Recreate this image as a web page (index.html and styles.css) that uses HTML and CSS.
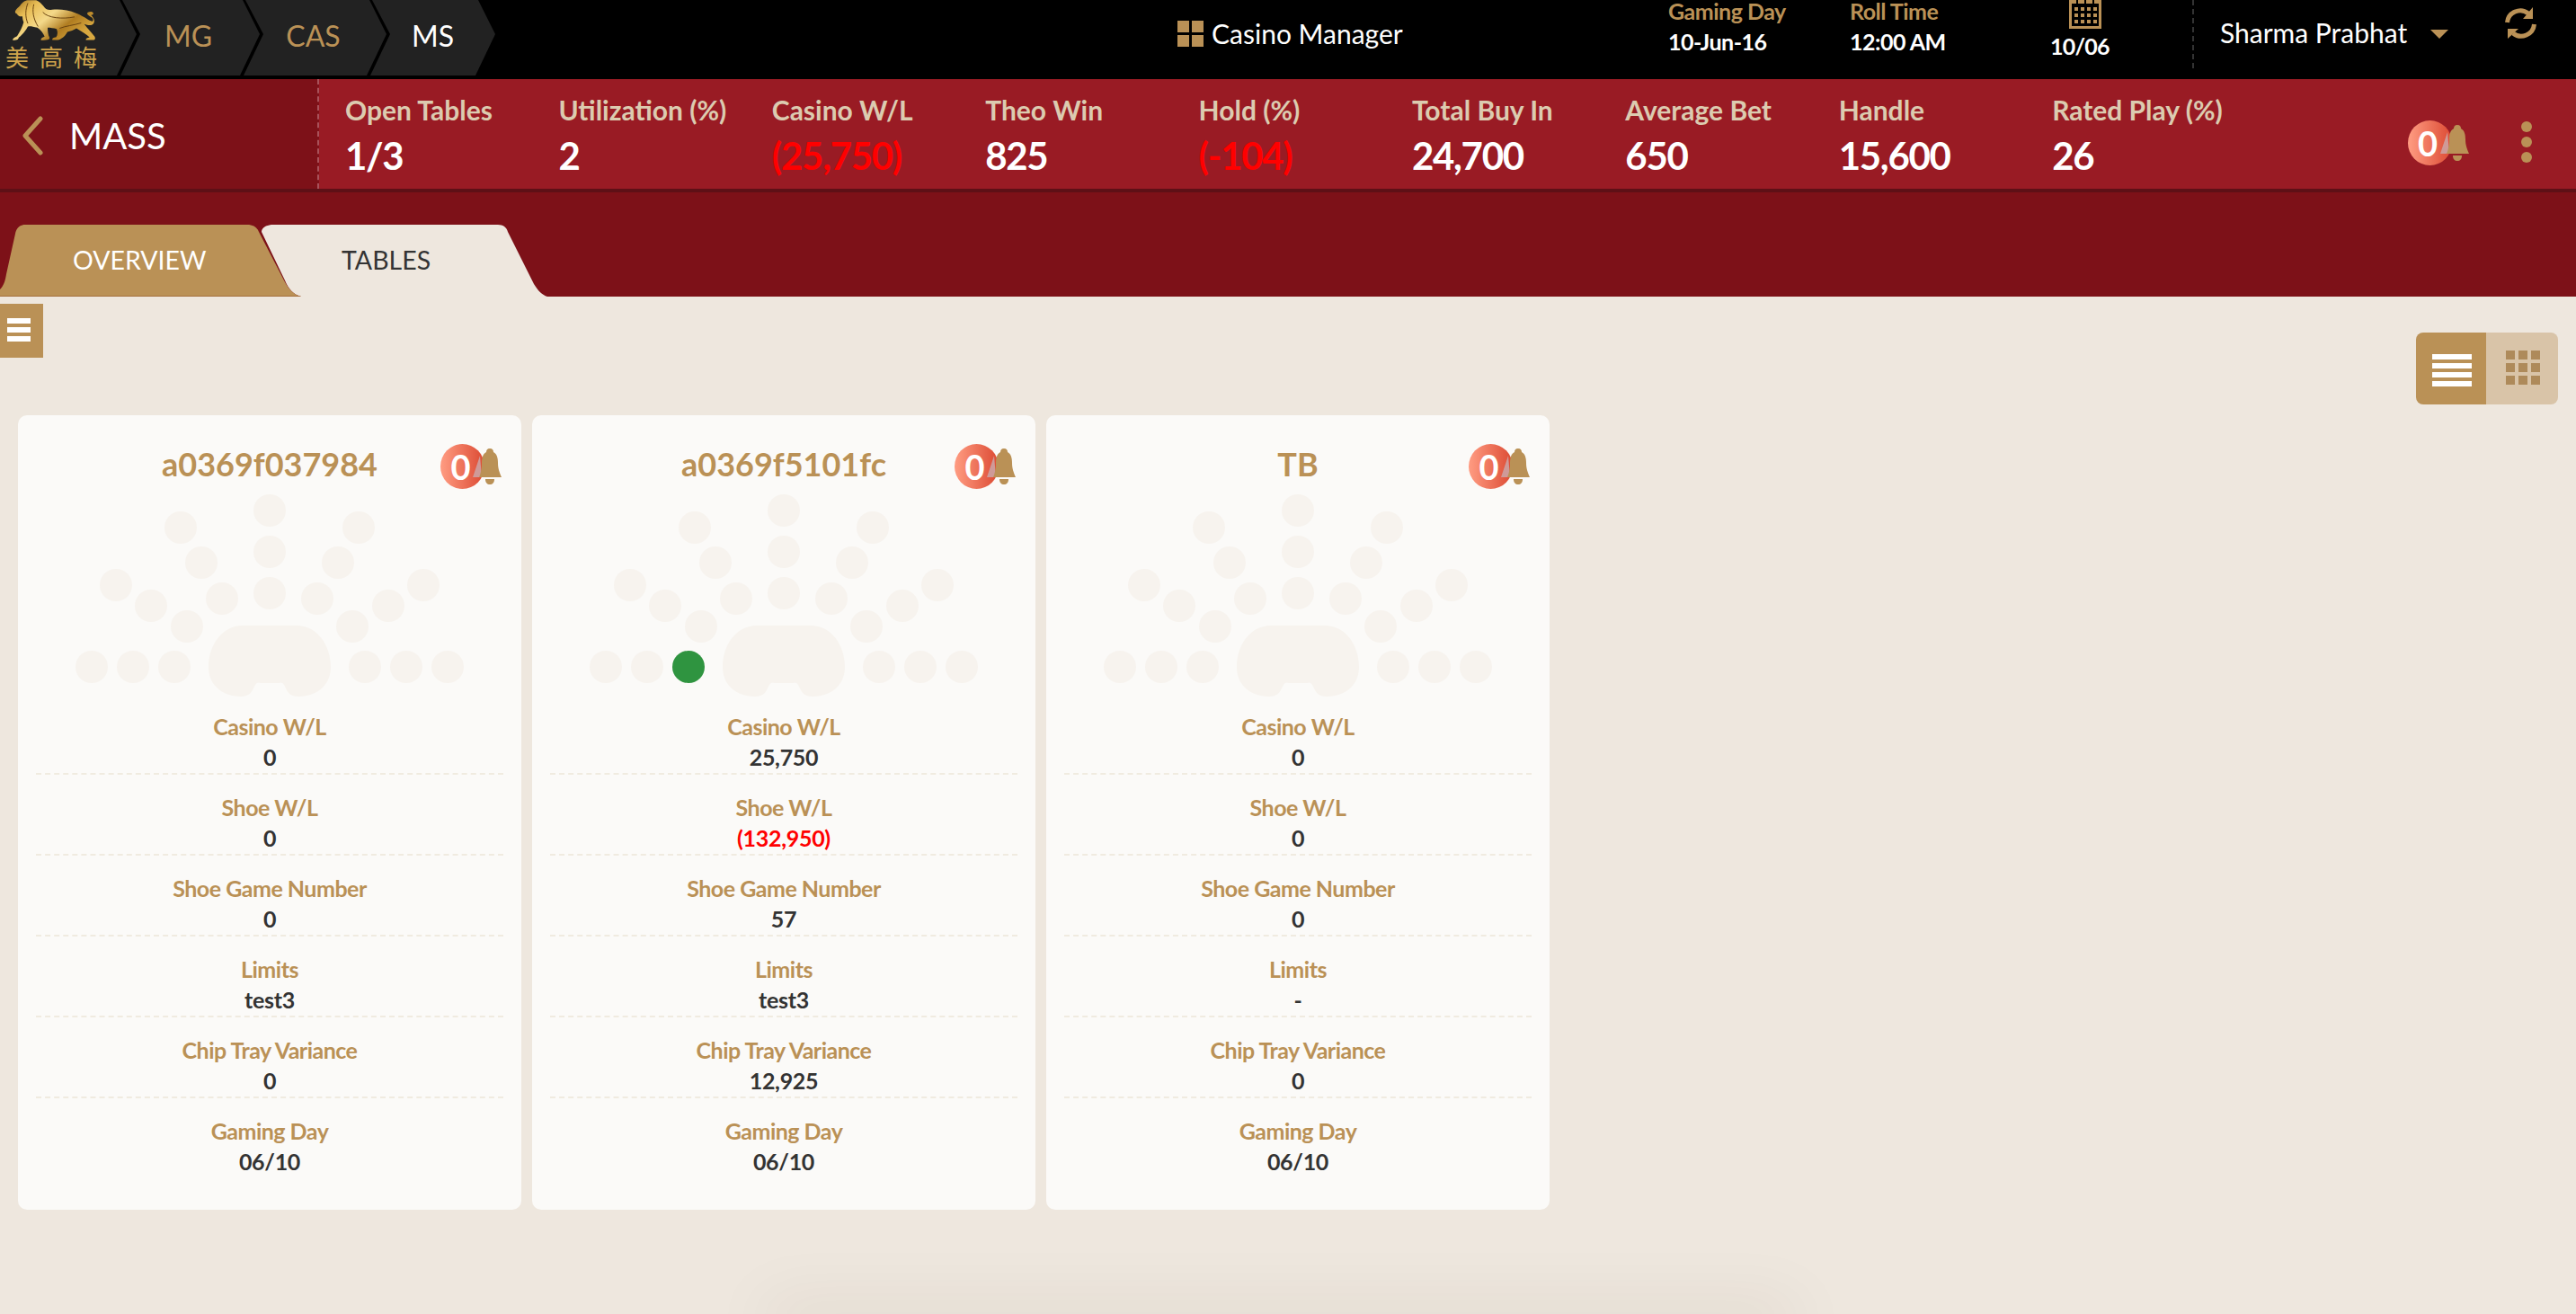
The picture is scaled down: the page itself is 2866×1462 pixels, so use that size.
FILE: index.html
```html
<!DOCTYPE html>
<html lang="en">
<head>
	<meta charset="UTF-8">
	<title>Casino Manager</title>
	<link rel="stylesheet" href="styles.css">
</head>
<body>
	<!-- shared icons -->
	<svg class="defs" width="0" height="0">
		<defs>
			<linearGradient id="gold" x1="0" y1="0" x2="1" y2="0.6">
				<stop offset="0" stop-color="#9a6a18"/>
				<stop offset="0.25" stop-color="#e8bd55"/>
				<stop offset="0.5" stop-color="#f4d98a"/>
				<stop offset="0.75" stop-color="#b07c20"/>
				<stop offset="1" stop-color="#d8a840"/>
			</linearGradient>
			<symbol id="bell" viewBox="0 0 32 42">
				<polygon points="0,33 8,9 10,33" fill="#cf9a98"/>
				<path d="M19 1C22 1 23 3 23 5C27 7 28 12 28 17C28 24 30 28 32 33H7C9 28 10 24 10 17C10 12 11 7 15 5C15 3 16 1 19 1Z" fill="#ba9156"/>
				<path d="M14 35H24C24 39 22 41 19 41C16 41 14 39 14 35Z" fill="#ba9156"/>
			</symbol>
			<symbol id="seats" viewBox="0 0 560 225">
				<g fill="#f7f3ee">
					<circle cx="280" cy="18" r="18"/><circle cx="280" cy="64" r="18"/><circle cx="280" cy="110" r="18"/>
					<circle cx="181" cy="37" r="18"/><circle cx="204" cy="76" r="18"/><circle cx="227" cy="116" r="18"/>
					<circle cx="379" cy="37" r="18"/><circle cx="356" cy="76" r="18"/><circle cx="333" cy="116" r="18"/>
					<circle cx="109" cy="101" r="18"/><circle cx="148" cy="124" r="18"/><circle cx="188" cy="147" r="18"/>
					<circle cx="451" cy="101" r="18"/><circle cx="412" cy="124" r="18"/><circle cx="372" cy="147" r="18"/>
					<circle cx="82" cy="192" r="18"/><circle cx="128" cy="192" r="18"/><circle cx="174" cy="192" r="18"/>
					<circle cx="386" cy="192" r="18"/><circle cx="432" cy="192" r="18"/><circle cx="478" cy="192" r="18"/>
					<path d="M250 146H310C333 146 348 168 348 192C348 212 333 225 312 225C302 225 300 220 296 212C294 209 293 210 290 210H270C267 210 266 209 264 212C260 220 258 225 248 225C227 225 212 212 212 192C212 168 227 146 250 146Z"/>
				</g>
			</symbol>
		</defs>
	</svg>

	<!-- top bar -->
	<header class="topbar">
		<ul class="crumbs">
			<li class="crumb crumb-logo">
				<svg class="lion" viewBox="0 0 360 140" width="120" height="47">
					<path fill="url(#gold)" d="M42 36C46 28 52 24 58 18C64 8 74 0 86 0L112 0C122 4 130 12 136 20C142 30 150 34 165 32C190 30 220 32 245 44C262 50 280 62 290 68C298 72 304 72 301 62C298 56 282 52 282 44C284 38 298 36 302 42C304 48 298 50 294 50C304 58 310 70 302 80C296 86 284 84 272 80C284 96 296 108 304 118C310 124 310 132 304 133L278 133C276 128 284 126 290 124C280 114 262 104 246 94C238 100 226 104 216 106C212 114 204 124 196 128C192 133 180 134 166 133C164 128 170 124 178 124C184 116 184 104 180 96C170 94 160 92 150 92C150 104 152 118 156 124C158 130 154 134 128 134C126 128 134 124 140 122C136 112 128 100 116 92C100 88 92 86 84 88C78 100 66 116 54 124C52 130 50 134 34 134C32 128 40 124 48 120C56 108 66 90 70 74C66 64 66 56 66 54C58 56 50 52 48 46C44 44 40 42 42 36Z"/>
					<path fill="none" stroke="#6b4410" stroke-width="3" d="M84 10C76 30 74 54 84 78M104 14C98 36 102 62 118 88M134 40C150 60 200 64 240 56M190 94C210 86 236 84 262 76"/>
				</svg>
				<span class="logo-text">美高梅</span>
			</li>
			<li class="crumb">MG</li>
			<li class="crumb">CAS</li>
			<li class="crumb crumb-on">MS</li>
		</ul>
		<div class="app-title">
			<span class="app-icon"><i></i><i></i><i></i><i></i></span>
			Casino Manager
		</div>
		<div class="info info-day"><span class="info-lbl">Gaming Day</span><span class="info-val">10-Jun-16</span></div>
		<div class="info info-roll"><span class="info-lbl">Roll Time</span><span class="info-val">12:00 AM</span></div>
		<div class="cal">
			<svg class="cal-icon" viewBox="0 0 36 32" width="36" height="32">
				<path d="M1.5 0V30.5H34.5V0" fill="none" stroke="#ba9156" stroke-width="3"/>
				<path d="M0 0H36V4H0Z" fill="#ba9156"/>
				<path d="M8 0H10V4H8ZM17 0H19V4H17ZM26 0H28V4H26Z" fill="#000"/>
				<path d="M6 8h4v4H6zM13 8h4v4h-4zM20 8h4v4h-4zM27 8h4v4h-4zM6 15h4v4H6zM13 15h4v4h-4zM20 15h4v4h-4zM27 15h4v4h-4zM6 22h4v4H6zM13 22h4v4h-4zM20 22h4v4h-4zM27 22h4v4h-4z" fill="#ba9156"/>
			</svg>
			<span class="info-val">10/06</span>
		</div>
		<div class="user">
			<span class="user-name">Sharma Prabhat</span>
			<span class="caret"></span>
		</div>
		<svg class="refresh" viewBox="0 0 35 36" width="35" height="36">
			<path d="M2.5 17A14.5 14.5 0 0 1 26 7M32.5 19A14.5 14.5 0 0 1 9 29" fill="none" stroke="#ba9156" stroke-width="5"/>
			<path d="M31 0V13H20ZM3 35V24H15Z" fill="#ba9156"/>
		</svg>
	</header>

	<!-- stats -->
	<section class="stats">
		<div class="stats-head">
			<svg class="back" viewBox="0 0 24 44" width="24" height="44">
				<path d="M21 3L4 22L21 41" fill="none" stroke="#ba9156" stroke-width="5" stroke-linecap="round" stroke-linejoin="round"/>
			</svg>
			<span class="stats-title">MASS</span>
		</div>
		<div class="stat"><div class="stat-lbl">Open Tables</div><div class="stat-val">1/3</div></div>
		<div class="stat"><div class="stat-lbl">Utilization (%)</div><div class="stat-val">2</div></div>
		<div class="stat"><div class="stat-lbl">Casino W/L</div><div class="stat-val neg">(25,750)</div></div>
		<div class="stat"><div class="stat-lbl">Theo Win</div><div class="stat-val">825</div></div>
		<div class="stat"><div class="stat-lbl">Hold (%)</div><div class="stat-val neg">(-104)</div></div>
		<div class="stat"><div class="stat-lbl">Total Buy In</div><div class="stat-val">24,700</div></div>
		<div class="stat"><div class="stat-lbl">Average Bet</div><div class="stat-val">650</div></div>
		<div class="stat"><div class="stat-lbl">Handle</div><div class="stat-val">15,600</div></div>
		<div class="stat"><div class="stat-lbl">Rated Play (%)</div><div class="stat-val">26</div></div>
		<div class="alert alert-stats">
			<span class="alert-num">0</span>
			<svg class="alert-bell" width="32" height="42"><use href="#bell"/></svg>
		</div>
		<div class="more"><i></i><i></i><i></i></div>
	</section>

	<!-- tabs -->
	<nav class="tabs">
		<div class="tab tab-on">OVERVIEW</div>
		<div class="tab tab-off">TABLES</div>
	</nav>

	<main class="content">
		<div class="toolbar">
			<div class="menu-btn"><i></i><i></i><i></i></div>
			<div class="view-toggle">
				<div class="view view-list"><i></i><i></i><i></i><i></i></div>
				<div class="view view-grid">
					<i></i><i></i><i></i><i></i><i></i><i></i><i></i><i></i><i></i>
				</div>
			</div>
		</div>

		<div class="cards">
			<div class="card">
				<h2 class="card-title">a0369f037984</h2>
				<div class="alert alert-card">
					<span class="alert-num">0</span>
					<svg class="alert-bell" width="32" height="42"><use href="#bell"/></svg>
				</div>
				<svg class="seats" width="560" height="225"><use href="#seats"/></svg>
				<div class="row"><div class="lbl">Casino W/L</div><div class="val">0</div></div>
				<div class="row"><div class="lbl">Shoe W/L</div><div class="val">0</div></div>
				<div class="row"><div class="lbl">Shoe Game Number</div><div class="val">0</div></div>
				<div class="row"><div class="lbl">Limits</div><div class="val">test3</div></div>
				<div class="row"><div class="lbl">Chip Tray Variance</div><div class="val">0</div></div>
				<div class="row"><div class="lbl">Gaming Day</div><div class="val">06/10</div></div>
			</div>

			<div class="card">
				<h2 class="card-title">a0369f5101fc</h2>
				<div class="alert alert-card">
					<span class="alert-num">0</span>
					<svg class="alert-bell" width="32" height="42"><use href="#bell"/></svg>
				</div>
				<svg class="seats" width="560" height="225">
					<use href="#seats"/>
					<circle cx="174" cy="192" r="18" fill="#2f9440"/>
				</svg>
				<div class="row"><div class="lbl">Casino W/L</div><div class="val">25,750</div></div>
				<div class="row"><div class="lbl">Shoe W/L</div><div class="val neg">(132,950)</div></div>
				<div class="row"><div class="lbl">Shoe Game Number</div><div class="val">57</div></div>
				<div class="row"><div class="lbl">Limits</div><div class="val">test3</div></div>
				<div class="row"><div class="lbl">Chip Tray Variance</div><div class="val">12,925</div></div>
				<div class="row"><div class="lbl">Gaming Day</div><div class="val">06/10</div></div>
			</div>

			<div class="card">
				<h2 class="card-title">TB</h2>
				<div class="alert alert-card">
					<span class="alert-num">0</span>
					<svg class="alert-bell" width="32" height="42"><use href="#bell"/></svg>
				</div>
				<svg class="seats" width="560" height="225"><use href="#seats"/></svg>
				<div class="row"><div class="lbl">Casino W/L</div><div class="val">0</div></div>
				<div class="row"><div class="lbl">Shoe W/L</div><div class="val">0</div></div>
				<div class="row"><div class="lbl">Shoe Game Number</div><div class="val">0</div></div>
				<div class="row"><div class="lbl">Limits</div><div class="val">-</div></div>
				<div class="row"><div class="lbl">Chip Tray Variance</div><div class="val">0</div></div>
				<div class="row"><div class="lbl">Gaming Day</div><div class="val">06/10</div></div>
			</div>
		</div>
	</main>
	<div class="page-shadow"></div>
</body>
</html>
```

FILE: styles.css
```css
*{box-sizing: border-box;}
html,body{margin: 0;height: 100%;}
body{height: 1462px;overflow: hidden;background: #eee7de;color: #333;font-family: Lato, "Noto Sans CJK SC", sans-serif;}
ul{list-style: none;margin: 0;padding: 0;}
i{display: block;}
.defs{position: absolute;}

/* top bar */
.topbar{display: flex;height: 88px;background: #000;color: #fff;}
.crumbs{display: flex;width: 551px;height: 84px;flex: none;}
.crumb{display: flex;align-items: center;justify-content: center;width: 155px;height: 84px;margin-left: -18px;padding: 0 8px 6px 4px;background: #222;color: #ba9156;font-size: 32px;
	clip-path: polygon(2px 0,calc(100% - 19px) 0,100% 38px,calc(100% - 22px) 84px,0 84px,22px 38px);}
.crumb:nth-child(3){width: 159px;}
.crumb:nth-child(4){width: 139px;padding-left: 8px;}
.crumb-on{color: #fff;}
.crumb-logo{display: block;width: 152px;margin-left: 0;padding: 0 0 0 3px;background: #222;
	clip-path: polygon(0 0,133px 0,152px 38px,130px 84px,0 84px);}
.lion{display: block;}
.logo-text{display: block;margin: 2px 0 0 3px;color: #cfa44c;font-size: 26px;line-height: 30px;letter-spacing: 12px;font-weight: 400;white-space: nowrap;}

.app-title{display: flex;align-items: center;gap: 9px;width: 546px;height: 74px;margin-left: 759px;flex: none;font-size: 30px;}
.app-icon{display: grid;grid-template-columns: 13px 13px;gap: 3px;}
.app-icon i{height: 13px;background: #ba9156;}
.info{display: flex;flex-direction: column;flex: none;}
.info-day{width: 202px;}
.info-roll{width: 223px;}
.info-lbl{color: #ba9156;font-size: 25px;line-height: 24px;font-weight: 700;letter-spacing: -.5px;}
.info-val{color: #fff;font-size: 25px;line-height: 44px;font-weight: 700;letter-spacing: -.5px;}
.cal{width: 158px;flex: none;}
.cal-icon{display: block;margin: 0 0 6px 21px;}
.cal .info-val{display: block;line-height: 26px;letter-spacing: -.8px;}
.user{display: flex;align-items: center;width: 348px;height: 76px;padding-left: 29px;flex: none;border-left: 2px dashed #333;}
.user-name{font-size: 30px;margin-bottom: 4px;}
.caret{width: 0;height: 0;margin-left: 26px;border: 10px solid transparent;border-top: 10px solid #ba9156;border-bottom: 0;}
.refresh{margin-top: 8px;flex: none;}

/* stats */
.stats{display: flex;height: 126px;background: #991b24;border-bottom: 4px solid #5e1016;}
.stats-head{display: flex;align-items: center;gap: 29px;width: 355px;padding: 3px 0 0 24px;margin-right: 29px;flex: none;background: #7d1118;border-right: 2px dashed #a8525a;}
.stats-title{color: #fff;font-size: 40px;}
.stat{width: 237.4px;padding-top: 16px;flex: none;}
.stat-lbl{color: #dccbb0;font-size: 30px;line-height: 36px;font-weight: 700;}
.stat-val{margin-top: 7px;color: #fff;font-size: 42px;line-height: 52px;font-weight: 700;letter-spacing: -1.3px;}
.neg{color: #f00;}

.alert{display: flex;align-items: flex-start;width: 68px;}
.alert-num{display: block;width: 49px;height: 50px;flex: none;border-radius: 50%;background: linear-gradient(to right,#ff9c82,#dc4a33);color: #fff;font-size: 38px;font-weight: 700;line-height: 50px;text-align: center;padding-right: 4px;}
.alert-bell{display: block;margin: 4px 0 0 -13px;flex: none;}
.alert-stats{margin: 46px 0 0 158px;}
.alert-card{position: absolute;top: 32px;right: 22px;}
.more{display: flex;flex-direction: column;gap: 5px;margin: 47px 0 0 58px;}
.more i{width: 12px;height: 12px;border-radius: 50%;background: #ba9156;}

/* tabs */
.tabs{display: flex;align-items: flex-end;height: 116px;background: #7d1118;}
.tab{display: flex;align-items: center;height: 80px;padding-bottom: 3px;font-size: 28.5px;}
.tab-on{position: relative;z-index: 1;width: 335px;padding-left: 81px;background: #ba9156;color: #fff;box-shadow: inset 0 -1px #a5703c;
	clip-path: path("M0 80V72C4 68 6 62 7 55L17 10C18 4 22 0 28 0H275C282 0 286 3 288 8L316 62C321 72 327 78 335 80Z");}
.tab-off{width: 318px;margin-left: -44px;padding-left: 89px;background: #eee7de;color: #333;
	clip-path: path("M0 8C0 3 6 0 13 0H263C270 0 273 4 274 8L303 66C308 74 312 78 318 80H44C36 78 30 72 26 62Z");}

/* content */
.toolbar{display: flex;justify-content: space-between;align-items: flex-start;height: 132px;}
.menu-btn{display: flex;flex-direction: column;gap: 4px;width: 48px;height: 60px;margin-top: 8px;padding: 16px 0 0 8px;background: #ba9156;}
.menu-btn i{width: 26px;height: 6px;background: #fff;}
.view-toggle{display: flex;width: 158px;height: 80px;margin: 40px 20px 0 0;border-radius: 8px;overflow: hidden;}
.view{height: 80px;}
.view-list{display: flex;flex-direction: column;gap: 4px;width: 78px;padding: 24px 0 0 18px;background: #ba9156;}
.view-list i{width: 44px;height: 6px;background: #fff;}
.view-grid{display: grid;grid-template-columns: repeat(3,10px);grid-auto-rows: 10px;gap: 4px;width: 80px;padding: 20px 0 0 22px;background: #d9c4a8;}
.view-grid i{background: #ae8a5a;}

.cards{display: flex;gap: 12px;padding-left: 20px;}
.card{position: relative;width: 560px;height: 884px;padding: 0 20px;background: #fbfaf8;border-radius: 10px;}
.card-title{height: 88px;margin: 0;padding-top: 34px;color: #ba9156;font-size: 36px;line-height: 40px;font-weight: 700;text-align: center;}
.seats{display: block;margin: 0 -20px -3px;}
.row{height: 90px;padding-top: 19px;border-bottom: 2px dashed #f0ebe0;text-align: center;}
.row:last-child{border-bottom: 0;}
.lbl{color: #ba9156;font-size: 25px;line-height: 34px;font-weight: 700;letter-spacing: -.5px;}
.val{color: #333;font-size: 25px;line-height: 34px;font-weight: 700;letter-spacing: -.3px;}
.val.neg{color: #f00;}

.page-shadow{position: fixed;left: 860px;bottom: -12px;width: 1130px;height: 12px;box-shadow: 0 0 70px 8px rgba(60,40,20,.1);}
```
